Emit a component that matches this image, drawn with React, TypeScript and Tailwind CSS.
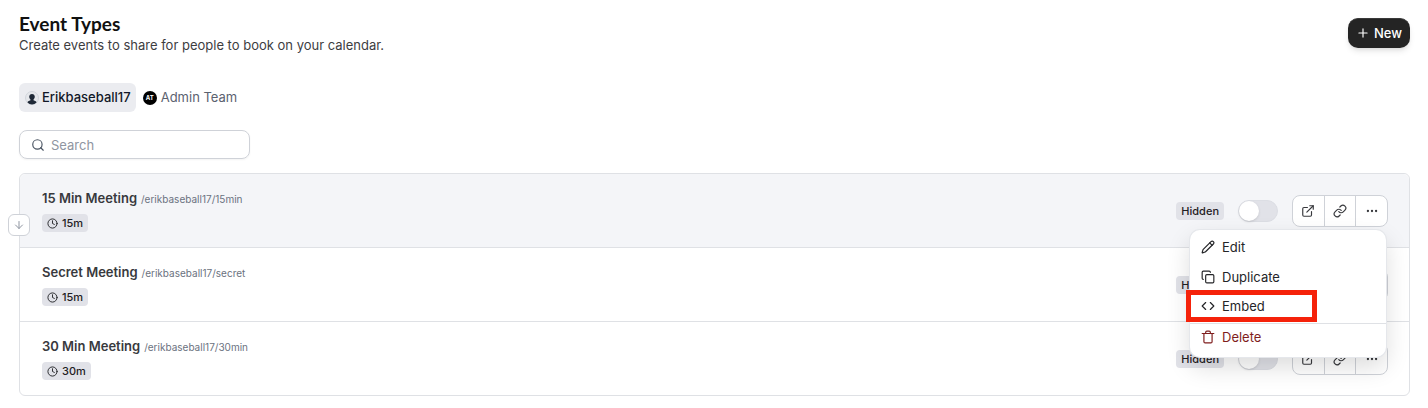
import React, { useState } from "react";
import {
  ArrowDown,
  Clock,
  Code,
  Copy,
  Ellipsis,
  ExternalLink,
  Pencil,
  Plus,
  Search,
} from "lucide-react";

type EventType = {
  id: number;
  title: string;
  slug: string;
  length: string;
};

const EVENTS: EventType[] = [
  { id: 1, title: "15 Min Meeting", slug: "/erikbaseball17/15min", length: "15m" },
  { id: 2, title: "Secret Meeting", slug: "/erikbaseball17/secret", length: "15m" },
  { id: 3, title: "30 Min Meeting", slug: "/erikbaseball17/30min", length: "30m" },
];

const App = () => {
  const [openMenu, setOpenMenu] = useState<number | null>(1);

  return (
    <main className="min-h-screen bg-white pl-[19px] pr-[18px] pt-3 pb-2 font-['Inter',sans-serif] text-[13px] leading-5 text-[#374151]">
      <Header />
      <ProfileTabs />
      <SearchBox />
      <ul className="mt-3.5 rounded-md border border-[#dfe1e5]">
        {EVENTS.map((event) => (
          <EventRow
            key={event.id}
            event={event}
            menuOpen={openMenu === event.id}
            toggleMenu={() => setOpenMenu(openMenu === event.id ? null : event.id)}
          />
        ))}
      </ul>
    </main>
  );
};

const Header = () => {
  return (
    <header className="flex items-start justify-between">
      <div>
        <h1 className="font-['Lato',sans-serif] text-[19px] font-bold leading-6 text-[#111111]">Event Types</h1>
        <p className="leading-[18px] text-[#3d3d3f]">Create events to share for people to book on your calendar.</p>
      </div>
      <button
        type="button"
        className="mt-1.5 flex h-[30px] items-center gap-1 rounded-[10px] border-t border-[#3a3a3a] bg-[#242424] pb-0.5 pl-2 pr-2 font-medium text-white shadow-md"
      >
        <Plus className="size-3.5" strokeWidth={2} />
        New
      </button>
    </header>
  );
};

const ProfileTabs = () => {
  return (
    <nav className="mt-[29px] flex items-center font-medium">
      <a href="#erik" className="flex h-[29px] items-center gap-[3px] rounded-md bg-[#ebecf0] pb-0.5 pl-1.5 pr-[5px] text-[#111827]">
        <PersonAvatar />
        Erikbaseball17
      </a>
      <a href="#team" className="flex h-[29px] items-center gap-1 pb-0.5 pl-[7px] font-normal text-[#5b6270]">
        <span className="mt-0.5 flex size-3.5 items-center justify-center rounded-full bg-black text-[6px] font-bold text-white">AT</span>
        Admin Team
      </a>
    </nav>
  );
};

const PersonAvatar = () => {
  return (
    <svg viewBox="0 0 14 14" className="mt-0.5 size-3.5" aria-hidden="true">
      <circle cx="7" cy="7" r="6.5" fill="#e5e7eb" stroke="#d1d5db" />
      <path
        d="M7 2.9c1.7 0 2.8 1.1 2.8 2.8 0 1.2-.6 2.2-1.3 2.8v.8l2.2.9c.5.2.8.7.8 1.2A6.5 6.5 0 0 1 7 13.5a6.5 6.5 0 0 1-4.500-2.100c0-.5.3-1 .8-1.2l2.2-.9v-.8C4.800 7.900 4.200 6.900 4.200 5.700c0-1.700 1.100-2.800 2.800-2.800z"
        fill="#1f2937"
      />
    </svg>
  );
};

const SearchBox = () => {
  return (
    <label className="mt-[18px] flex h-[29px] w-[231px] items-center gap-1.5 rounded-lg border border-[#cfd2d8] pl-[11px] pr-2 shadow-xs">
      <Search className="size-3.5 shrink-0 text-[#4b5563]" />
      <input
        type="text"
        aria-label="Search"
        placeholder="Search"
        className="w-full min-w-0 bg-transparent outline-none placeholder:text-[#8f95a1]"
      />
    </label>
  );
};

type RowProps = {
  event: EventType;
  menuOpen: boolean;
  toggleMenu: () => void;
};

const EventRow = ({ event, menuOpen, toggleMenu }: RowProps) => {
  const active = event.id === 1;

  return (
    <li
      className={`relative flex items-center justify-between border-b border-[#dfe1e5] pl-[22px] pr-[21px] last:border-b-0 ${active ? "rounded-t-md bg-[#f4f5f8]" : ""}`}
    >
      {active && (
        <button
          type="button"
          aria-label="Move down"
          className="absolute -left-3 top-10 flex size-[22px] items-center justify-center rounded-md border border-[#cfd2d8] bg-white text-[#8f95a1]"
        >
          <ArrowDown className="size-3" />
        </button>
      )}
      <div className="pb-[15px] pt-3.5">
        <h2 className="flex items-baseline gap-1 font-semibold text-[#38393d]">
          {event.title}
          <span className="text-[10px] font-normal leading-4 text-[#6b7280]">{event.slug}</span>
        </h2>
        <span className="mt-1.5 flex h-[18px] w-fit items-center gap-1 rounded bg-[#e1e2e8] px-[5px] text-[11px] font-medium text-[#1f2023]">
          <Clock className="size-[11px]" />
          {event.length}
        </span>
      </div>
      <div className="flex items-center gap-3.5">
        <span className="flex h-[18px] items-center rounded bg-[#e1e2e8] px-[5px] text-[11px] font-medium text-[#1f2023]">Hidden</span>
        <input
          type="checkbox"
          role="switch"
          aria-label={`Show ${event.title}`}
          className="h-[22px] w-10 appearance-none rounded-full border border-[#dcdee4] bg-[#e1e2e8] before:block before:size-5 before:rounded-full before:bg-white before:shadow-sm checked:bg-[#242424] checked:before:translate-x-[18px]"
        />
        <div className="relative">
          <div className="flex h-8 w-24 divide-x divide-[#cfd2d8] rounded-lg border border-[#cfd2d8] bg-white text-[#38393d]">
            <a href="#preview" aria-label="Preview" className="flex flex-1 items-center justify-center">
              <ExternalLink className="size-3.5" />
            </a>
            <button type="button" aria-label="Copy link" className="flex flex-1 items-center justify-center">
              <LinkIcon />
            </button>
            <button type="button" aria-label="More options" onClick={toggleMenu} className="flex flex-1 items-center justify-center">
              <Ellipsis className="size-3.5" />
            </button>
          </div>
          {menuOpen && <OptionsMenu />}
        </div>
      </div>
    </li>
  );
};

const LinkIcon = () => {
  return (
    <svg viewBox="0 0 24 24" className="size-3.5" fill="none" stroke="currentColor" strokeWidth="2" strokeLinecap="round" strokeLinejoin="round">
      <path d="M10 13a5 5 0 0 0 7.540.540l3-3a5 5 0 0 0-7.070-7.070l-1.720 1.710" />
      <path d="M14 11a5 5 0 0 0-7.540-.540l-3 3a5 5 0 0 0 7.070 7.070l1.710-1.710" />
    </svg>
  );
};

const TrashIcon = () => {
  return (
    <svg viewBox="0 0 24 24" className="size-3.5" fill="none" stroke="currentColor" strokeWidth="2" strokeLinecap="round" strokeLinejoin="round">
      <path d="M2 6h20M5 6v14a2 2 0 0 0 2 2h10a2 2 0 0 0 2-2V6M8 6V4a2 2 0 0 1 2-2h4a2 2 0 0 1 2 2v2" />
    </svg>
  );
};

const OptionsMenu = () => {
  const item = "flex w-full items-center gap-[7px] pl-[11px]";

  return (
    <div className="absolute right-0.5 top-[35px] z-10 w-[196px] rounded-[10px] bg-white text-[#242528] shadow-[0_0_0_1px_#e5e7eb,0_10px_24px_rgba(0,0,0,0.14)]">
      <button type="button" className={`${item} h-[34px]`}>
        <Pencil className="size-3.5" />
        Edit
      </button>
      <button type="button" className={`${item} h-[26px]`}>
        <Copy className="size-3.5" />
        Duplicate
      </button>
      <button type="button" className={`${item} relative h-[33px]`}>
        <Code className="size-3.5" />
        Embed
        {/* highlight around the embed option */}
        <span className="pointer-events-none absolute -left-1 top-0 h-8 w-[131px] border-[5px] border-[#f5220a]" />
      </button>
      <button type="button" className={`${item} h-[34px] border-t border-[#dfe1e5] pb-1.5 text-[#7f1d1d]`}>
        <TrashIcon />
        Delete
      </button>
    </div>
  );
};

export default App;
